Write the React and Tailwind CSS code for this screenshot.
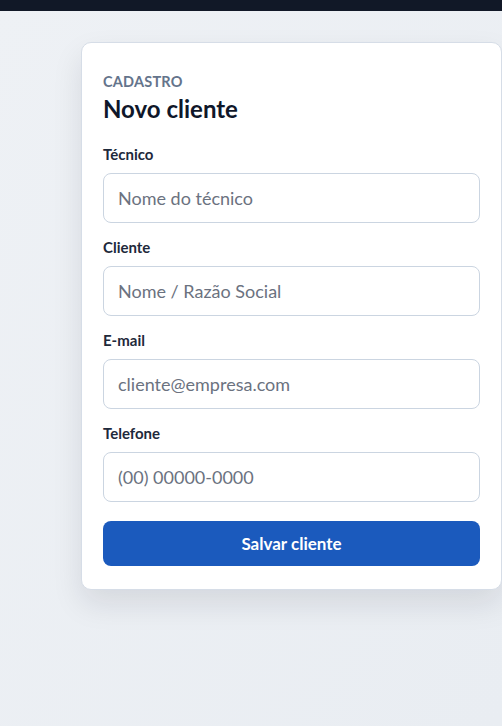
import React from "react";

const fields = [
  { label: "Técnico", placeholder: "Nome do técnico", type: "text" },
  { label: "Cliente", placeholder: "Nome / Razão Social", type: "text" },
  { label: "E-mail", placeholder: "cliente@empresa.com", type: "email" },
  { label: "Telefone", placeholder: "(00) 00000-0000", type: "tel" },
];

const App = () => {
  return (
    <div
      className="min-h-[726px] w-[502px] overflow-hidden bg-gradient-to-br from-[#eef1f5] to-[#e9edf2]"
      style={{ fontFamily: '"Lato", "Noto Sans", sans-serif' }}
    >
      <div className="h-[11px] w-full bg-[#111827]" />
      <div className="pl-[81px] pt-[31px]">
        <div className="w-[421px] rounded-[10px] border border-[#d6dde7] bg-white px-[21px] pb-[23px] pt-[29px] shadow-[0_14px_30px_rgba(15,23,42,0.10)]">
          <p className="text-[14.5px] leading-5 font-bold uppercase tracking-[0.2px] text-[#64748b]">
            Cadastro
          </p>
          <h1 className="mt-[3px] text-[24px] leading-7 font-bold text-[#0f172a]">
            Novo cliente
          </h1>

          <form className="mt-[21px] flex flex-col gap-[14px]">
            {fields.map((f) => (
              <div key={f.label} className="flex flex-col gap-[9px]">
                <label className="text-[15px] leading-5 font-bold text-[#1e293b]">
                  {f.label}
                </label>
                <input
                  type={f.type}
                  placeholder={f.placeholder}
                  className="h-[50px] w-full rounded-[8px] border border-[#cbd5e1] bg-white px-[14px] text-[18px] text-[#0f172a] placeholder:text-[#6b7280] outline-none"
                />
              </div>
            ))}
            <button
              type="button"
              className="mt-[5px] h-[45px] w-full rounded-[8px] bg-[#1b5abd] text-[17px] font-bold text-white"
            >
              Salvar cliente
            </button>
          </form>
        </div>
      </div>
    </div>
  );
};

export default App;
